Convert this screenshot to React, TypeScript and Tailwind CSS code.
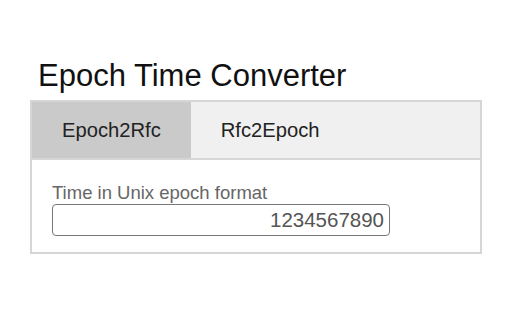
import React, { useState } from "react";

const tabs = ["Epoch2Rfc", "Rfc2Epoch"];

export default function App() {
  const [active, setActive] = useState(0);
  const [value, setValue] = useState("1234567890");

  return (
    <div className="min-h-[320px] w-[512px] bg-white pl-[30px] pt-[59px] font-['Liberation_Sans',Arial,sans-serif]">
      <h1 className="ml-[8px] text-[31px] leading-[34px] text-[#111]">Epoch Time Converter</h1>

      <div className="mt-[7px] w-[452px] border-2 border-[#d6d6d6]">
        <div className="flex h-[58px] border-b-2 border-[#d6d6d6] bg-[#f0f0f0]">
          {tabs.map((t, i) => (
            <button
              key={t}
              onClick={() => setActive(i)}
              className={
                "px-[30px] text-[20.2px] leading-[22px] text-[#222] " +
                (active === i ? "bg-[#cacaca]" : "bg-[#f0f0f0]")
              }
            >
              {t}
            </button>
          ))}
        </div>

        <div className="px-[20px] pb-[16px] pt-[22px]">
          <label className="block text-[18.5px] leading-[21px] text-[#666]">Time in Unix epoch format</label>
          <input
            value={value}
            onChange={(e) => setValue(e.target.value)}
            className="mt-[1px] h-[32px] w-[338px] rounded-[4px] border border-[#777] px-[5px] text-right text-[20.5px] text-[#555] outline-none"
          />
        </div>
      </div>
    </div>
  );
}
